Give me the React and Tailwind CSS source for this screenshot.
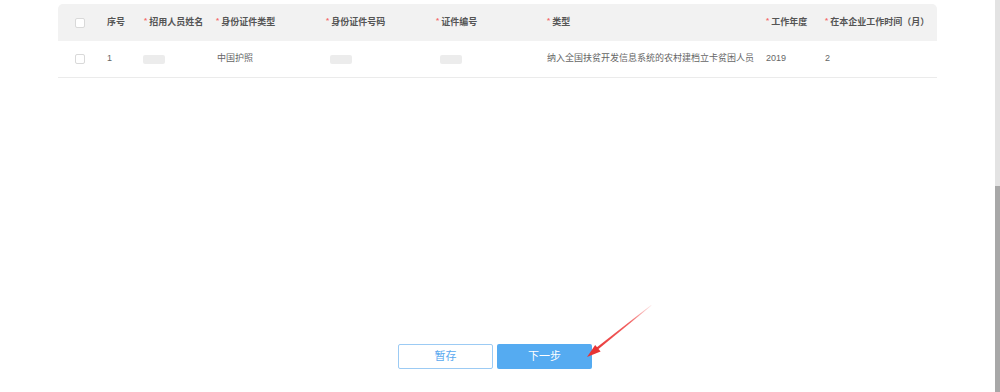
const cols = "grid grid-cols-[49px_37px_72px_110px_110px_111px_219px_59px_112px]";

function Req({ children }) {
  return (
    <div className="flex items-center">
      <span className="text-[#f56c6c] text-[8px] mr-[2px] -mt-[3px]">*</span>
      <span>{children}</span>
    </div>
  );
}

function Check() {
  return <div className="ml-[17px] w-[10px] h-[10px] rounded-[2px] border border-[#d9d9d9] bg-white" />;
}

function Blur({ className = "" }) {
  return <div className={"h-[9px] w-[22px] bg-[#ececec] rounded-[2px] blur-[0.6px] " + className} />;
}

export default function App() {
  return (
    <div className="relative flex w-[1000px] h-[392px] bg-white overflow-hidden" style={{ fontFamily: '"Liberation Sans", "Noto Sans CJK SC", sans-serif' }}>
      <div className="flex-1 flex flex-col">
        <div className="pt-[4px] pl-[58px] w-[937px]">
          <div className={cols + " h-[37px] items-center bg-[#f2f2f2] rounded-t-[5px] text-[9px] font-bold text-[#555]"}>
            <Check />
            <div>序号</div>
            <Req>招用人员姓名</Req>
            <Req>身份证件类型</Req>
            <Req>身份证件号码</Req>
            <Req>证件编号</Req>
            <Req>类型</Req>
            <Req>工作年度</Req>
            <Req>在本企业工作时间（月）</Req>
          </div>
          <div className={cols + " h-[37px] items-center border-b border-[#ebebeb] text-[9px] text-[#666]"}>
            <Check />
            <div>1</div>
            <Blur className="-ml-[1px]" />
            <div className="pl-[1px]">中国护照</div>
            <Blur className="ml-[4px]" />
            <Blur className="ml-[4px]" />
            <div className="whitespace-nowrap">纳入全国扶贫开发信息系统的农村建档立卡贫困人员</div>
            <div>2019</div>
            <div>2</div>
          </div>
        </div>
        <div className="flex pl-[398px] mt-[266px] gap-[4px]">
          <button className="w-[95px] h-[25px] rounded-[2px] border border-[#9ccbf4] bg-white text-[11px] text-[#5aa9ef]">暂存</button>
          <button className="w-[95px] h-[25px] rounded-[2px] bg-[#55abf1] text-[11px] text-white">下一步</button>
        </div>
      </div>
      <div className="w-[5px] flex flex-col">
        <div className="h-[186px] bg-[#e3e3e3]" />
        <div className="flex-1 bg-[#a8a8a8]" />
      </div>
      <svg className="absolute left-0 top-0" width="1000" height="392" viewBox="0 0 1000 392">
        <defs>
          <linearGradient id="ar" x1="651" y1="305" x2="590" y2="354" gradientUnits="userSpaceOnUse">
            <stop offset="0" stopColor="#ee3b3b" stopOpacity="0.1" />
            <stop offset="0.35" stopColor="#ee3b3b" stopOpacity="0.8" />
            <stop offset="1" stopColor="#e83434" />
          </linearGradient>
        </defs>
        <polygon points="651,305 651.6,305.6 597.9,349.6 596.6,347.6" fill="url(#ar)" />
        <polygon points="587,357 595.2,344.9 600.6,351.6" fill="#e83434" />
      </svg>
    </div>
  );
}
